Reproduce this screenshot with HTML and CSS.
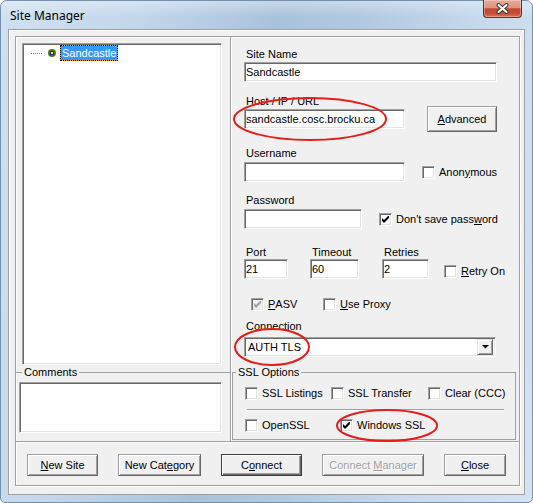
FILE: index.html
```html
<!DOCTYPE html>
<html lang="en">

<head>
    <meta charset="UTF-8">
    <meta name="viewport" content="width=device-width, initial-scale=1.0">
    <title>Site Manager</title>
    <link rel="stylesheet" href="styles.css">
</head>

<body>
    <div class="window">
        <div class="titlebar">
            <span class="title">Site Manager</span>
            <div class="close-btn">
                <svg width="13" height="11" viewBox="0 0 13 11">
                    <path d="M2.5 2 L10.5 9 M10.5 2 L2.5 9" stroke="#3a3a3a" stroke-width="4" stroke-linecap="round" />
                    <path d="M2.5 2 L10.5 9 M10.5 2 L2.5 9" stroke="#fff" stroke-width="2" stroke-linecap="round" />
                </svg>
            </div>
        </div>

        <div class="client">
            <div class="panel">
                <div class="top">
                    <div class="left">
                        <div class="tree sunken">
                            <div class="tree-item">
                                <span class="tree-line"></span>
                                <svg class="site-icon" width="8" height="8" viewBox="0 0 8 8">
                                    <circle cx="4" cy="4" r="4" fill="#4e7b18" />
                                    <rect x="2" y="2" width="4" height="4" fill="#13308c" />
                                    <rect x="3" y="3" width="2" height="2" fill="#f4e21c" />
                                </svg>
                                <span class="tree-label">Sandcastle</span>
                            </div>
                        </div>

                        <fieldset class="comments">
                            <legend>Comments</legend>
                            <div class="memo sunken"></div>
                        </fieldset>
                    </div>

                    <div class="right">
                        <label class="lbl lbl-site">Site Name</label>
                        <input class="field sunken site-field" type="text" value="Sandcastle">

                        <label class="lbl lbl-host">Host / IP / URL</label>
                        <div class="row host-row">
                            <input class="field sunken host-field" type="text" value="sandcastle.cosc.brocku.ca">
                            <button class="btn advanced"><u>A</u>dvanced</button>
                        </div>

                        <label class="lbl lbl-user">Username</label>
                        <div class="row field-row">
                            <input class="field sunken user-field" type="text" value="">
                            <span class="check anon"><span class="cb"></span>Anon<u>y</u>mous</span>
                        </div>

                        <label class="lbl lbl-pass">Password</label>
                        <div class="row field-row">
                            <input class="field sunken pass-field" type="text" value="">
                            <span class="check nosave">
                                <span class="cb">
                                    <svg width="7" height="7" viewBox="0 0 7 7"><polygon points="0,2 2,4 7,-1 7,2 2,7 0,5" fill="#000" /></svg>
                                </span>Don't save pass<u>w</u>ord
                            </span>
                        </div>

                        <div class="row numbers">
                            <div class="num port">
                                <label class="lbl">Port</label>
                                <input class="field sunken" type="text" value="21">
                            </div>
                            <div class="num timeout">
                                <label class="lbl">Timeout</label>
                                <input class="field sunken" type="text" value="60">
                            </div>
                            <div class="num retries">
                                <label class="lbl">Retries</label>
                                <input class="field sunken" type="text" value="2">
                            </div>
                            <span class="check retry"><span class="cb"></span><u>R</u>etry On</span>
                        </div>

                        <div class="row modes">
                            <span class="check pasv">
                                <span class="cb disabled">
                                    <svg width="7" height="7" viewBox="0 0 7 7"><polygon points="0,2 2,4 7,-1 7,2 2,7 0,5" fill="#a0a0a0" /></svg>
                                </span><u>P</u>ASV
                            </span>
                            <span class="check"><span class="cb"></span><u>U</u>se Proxy</span>
                        </div>

                        <label class="lbl lbl-conn">Connection</label>
                        <div class="combo sunken">
                            <span class="combo-text">AUTH TLS</span>
                            <span class="dd-btn">
                                <svg width="7" height="4" viewBox="0 0 7 4"><polygon points="0,0 7,0 3.5,3.5" fill="#000" /></svg>
                            </span>
                        </div>

                        <fieldset class="ssl">
                            <legend>SSL Options</legend>
                            <div class="ssl-row">
                                <span class="check ssl-listings"><span class="cb"></span>SSL Listings</span>
                                <span class="check ssl-transfer"><span class="cb"></span>SSL Transfer</span>
                                <span class="check"><span class="cb"></span>Clear (CCC)</span>
                            </div>
                            <div class="ssl-sep"></div>
                            <div class="ssl-row second">
                                <span class="check openssl"><span class="cb"></span>OpenSSL</span>
                                <span class="check">
                                    <span class="cb">
                                        <svg width="7" height="7" viewBox="0 0 7 7"><polygon points="0,2 2,4 7,-1 7,2 2,7 0,5" fill="#000" /></svg>
                                    </span>Windows SSL
                                </span>
                            </div>
                        </fieldset>
                    </div>
                </div>

                <div class="buttons">
                    <button class="btn new-site"><u>N</u>ew Site</button>
                    <button class="btn new-cat">New Cat<u>e</u>gory</button>
                    <button class="btn default connect">C<u>o</u>nnect</button>
                    <button class="btn disabled connect-mgr">Connect <u>M</u>anager</button>
                    <button class="btn close"><u>C</u>lose</button>
                </div>
            </div>
        </div>

        <svg class="marks" width="533" height="503" viewBox="0 0 533 503">
            <ellipse cx="310" cy="119" rx="76" ry="21" />
            <ellipse cx="272" cy="347" rx="37" ry="18" />
            <ellipse cx="387" cy="425.5" rx="50" ry="15.5" />
        </svg>
    </div>
</body>

</html>
```

FILE: styles.css
```css
body {
    margin: 0;
    background-color: #fff;
    font-family: "Liberation Sans", Arial, sans-serif;
    font-size: 11px;
    color: #000;
}

.window {
    position: relative;
    width: 533px;
    height: 503px;
    box-sizing: border-box;
    border: 1px solid #7390ae;
    border-radius: 7px 7px 5px 5px;
    background:
        linear-gradient(180deg, rgba(255, 255, 255, 0.35) 0, rgba(255, 255, 255, 0) 16px),
        linear-gradient(100deg, #cfe0f0 0%, #c3d7eb 22%, #a9c2dc 45%, #b0c8e0 58%, #c8dbee 80%, #d3e3f2 100%);
}

/* title bar */
.titlebar {
    display: flex;
    align-items: center;
    height: 28px;
    padding-left: 9px;
}

.title {
    font-family: "Noto Sans", "Open Sans", sans-serif;
    font-size: 12px;
}

.close-btn {
    display: flex;
    align-items: center;
    justify-content: center;
    align-self: flex-start;
    margin: -1px 10px 0 auto;
    width: 39px;
    height: 18px;
    box-sizing: border-box;
    border: 1px solid #6b2c22;
    border-top: none;
    border-radius: 0 0 4px 4px;
    background: linear-gradient(180deg, #e8ab9b 0%, #dc9380 45%, #c2472f 52%, #c54d35 78%, #da7459 100%);
    box-shadow: inset 0 0 0 1px rgba(255, 255, 255, 0.3);
}

/* dialog body */
.client {
    margin: 0 7px;
    height: 466px;
    box-sizing: border-box;
    padding: 6px 3px 6px 6px;
    background-color: #f0f0f0;
    border: 1px solid #a0a0a0;
    box-shadow: inset 1px 1px #fff;
}

.panel {
    width: 505px;
    height: 450px;
    box-sizing: border-box;
    border: 1px solid #a0a0a0;
    box-shadow: inset 1px 1px #fff, 1px 1px #fff;
}

.top {
    display: flex;
    height: 405px;
    box-sizing: border-box;
    border-bottom: 1px solid #a0a0a0;
}

.sunken {
    box-sizing: border-box;
    background-color: #fff;
    border: 1px solid;
    border-color: #a0a0a0 #fff #fff #a0a0a0;
    box-shadow: inset 1px 1px #696969, inset -1px -1px #e3e3e3;
}

/* left side: tree + comments */
.left {
    width: 215px;
    box-sizing: border-box;
    padding-top: 6px;
    border-right: 1px solid #a0a0a0;
}

.tree {
    width: 200px;
    height: 322px;
    margin-left: 6px;
}

.tree-item {
    display: flex;
    align-items: center;
    height: 16px;
    margin-top: 1px;
    padding-left: 8px;
}

.tree-line {
    width: 11px;
    height: 1px;
    background-image: repeating-linear-gradient(to right, #808080 0 1px, transparent 1px 2px);
}

.site-icon {
    margin-left: 6px;
}

.tree-label {
    margin-left: 4px;
    height: 16px;
    box-sizing: border-box;
    padding: 0 1px;
    line-height: 14px;
    color: #fff;
    background-color: #3399ff;
    border: 1px solid #f09a3a;
    outline: 1px dotted #000;
    outline-offset: -1px;
}

.comments {
    margin: 1px 0 0;
    padding: 0;
    min-width: 0;
    border: none;
    border-top: 1px solid #a0a0a0;
}

.comments legend {
    margin-left: 6px;
    padding: 0 2px;
    line-height: 13px;
}

.memo {
    width: 203px;
    height: 51px;
    margin: 3px 0 0 3px;
}

/* right side: site settings */
.right {
    flex: 1;
    padding-left: 12px;
    border-left: 1px solid #fff;
}

.lbl {
    display: block;
    line-height: 13px;
    padding-left: 2px;
}

.row {
    display: flex;
    align-items: center;
}

.field {
    display: block;
    height: 20px;
    padding: 0 1px;
    font: inherit;
    color: #000;
    outline: none;
}

.lbl-site {
    margin-top: 11px;
}

.site-field {
    width: 253px;
    margin-top: 1px;
}

.lbl-host {
    margin-top: 13px;
}

.host-row {
    height: 26px;
    margin-top: -2px;
}

.host-field,
.user-field {
    width: 161px;
}

.lbl-user {
    margin-top: 15px;
}

.field-row {
    margin-top: 2px;
}

.lbl-pass {
    margin-top: 12px;
}

.pass-field {
    width: 118px;
}

.anon,
.nosave {
    margin-left: 17px;
}

.numbers {
    align-items: flex-start;
    margin-top: 17px;
}

.num .field {
    margin-top: 0;
}

.port {
    width: 66px;
}

.port .field {
    width: 44px;
}

.timeout {
    width: 72px;
}

.timeout .field {
    width: 49px;
}

.retries .field {
    width: 47px;
}

.retry {
    margin: 19px 0 0 15px;
}

.modes {
    margin-top: 19px;
    padding-left: 7px;
}

.pasv {
    width: 72px;
}

.lbl-conn {
    margin-top: 9px;
}

/* checkboxes */
.check {
    display: flex;
    align-items: center;
    line-height: 13px;
    white-space: nowrap;
}

.cb {
    display: flex;
    align-items: center;
    justify-content: center;
    flex: none;
    width: 13px;
    height: 13px;
    margin-right: 4px;
    box-sizing: border-box;
    background-color: #fff;
    border: 1px solid;
    border-color: #a0a0a0 #fff #fff #a0a0a0;
    box-shadow: inset 1px 1px #696969, inset -1px -1px #e3e3e3;
}

.cb.disabled {
    background-color: #f0f0f0;
}

/* combo box */
.combo {
    display: flex;
    align-items: center;
    justify-content: space-between;
    width: 252px;
    height: 20px;
    margin-top: 4px;
    padding: 2px 2px 2px 3px;
}

.dd-btn {
    display: flex;
    align-items: center;
    justify-content: center;
    width: 16px;
    height: 16px;
    box-sizing: border-box;
    background-color: #f0f0f0;
    border: 1px solid;
    border-color: #e3e3e3 #696969 #696969 #e3e3e3;
    box-shadow: inset 1px 1px #fff, inset -1px -1px #a0a0a0;
}

/* ssl options */
.ssl {
    width: 284px;
    margin: 9px 0 0 -12px;
    padding: 0 0 7px;
    min-width: 0;
    box-sizing: border-box;
    border: 1px solid #a0a0a0;
}

.ssl legend {
    margin-left: 3px;
    padding: 0 2px;
    line-height: 13px;
}

.ssl-row {
    display: flex;
    margin-top: 8px;
    padding-left: 12px;
}

.ssl-row.second {
    margin-top: 8px;
}

.ssl-listings {
    width: 86px;
}

.ssl-transfer {
    width: 97px;
}

.openssl {
    width: 95px;
}

.ssl-sep {
    width: 257px;
    margin: 9px 0 0 14px;
    border-top: 1px solid #a0a0a0;
    border-bottom: 1px solid #fff;
}

/* buttons */
.buttons {
    display: flex;
    gap: 20px;
    padding: 11px 0 0 11px;
    border-top: 1px solid #fff;
}

.btn {
    height: 22px;
    padding: 0;
    box-sizing: border-box;
    font: inherit;
    color: #000;
    background-color: #f0f0f0;
    border: 1px solid;
    border-color: #a0a0a0 #696969 #696969 #a0a0a0;
    box-shadow: inset 1px 1px #fff, inset -1px -1px #a0a0a0;
}

.btn.default {
    border-color: #3c3c3c;
    box-shadow: inset 1px 1px #fff, inset -1px -1px #696969, inset -2px -2px #a0a0a0;
}

.btn.disabled {
    color: #a0a0a0;
    text-shadow: 1px 1px #fff;
}

.advanced {
    width: 70px;
    height: 26px;
    margin-left: 22px;
}

.new-site {
    width: 71px;
}

.new-cat {
    width: 83px;
}

.connect {
    width: 81px;
}

.connect-mgr {
    width: 102px;
}

.close {
    width: 62px;
}

/* red annotation rings */
.marks {
    position: absolute;
    left: -1px;
    top: -1px;
    pointer-events: none;
}

.marks ellipse {
    fill: none;
    stroke: #e41e1a;
    stroke-width: 2;
}
```
